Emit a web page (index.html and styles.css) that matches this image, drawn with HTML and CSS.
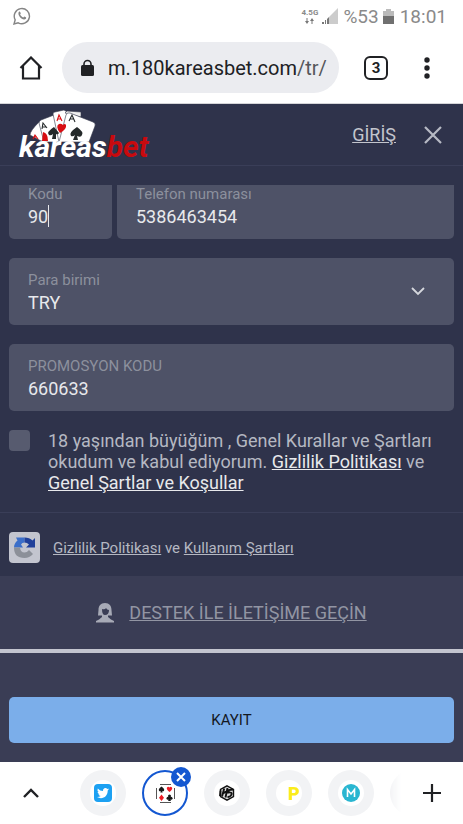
FILE: index.html
```html
<!DOCTYPE html>
<html lang="tr">
<head>
<meta charset="utf-8">
<meta name="viewport" content="width=device-width, initial-scale=1">
<title>Kareasbet</title>
<link rel="stylesheet" href="styles.css">
</head>
<body>
<div class="status">
  <svg class="status-app" width="18" height="18" viewBox="0 0 18 18" fill="none" stroke="#858585" stroke-width="1.4"><path d="M1 17l1.2-4.2A7.6 7.6 0 1 1 5.200 15.800z"/><path d="M5.600 5.200c.8-1.200 1.500-.6 2.200 1.200l-.7 1.100c.8 1.500 1.700 2.400 3.200 3l1-.9c1.800.8 2.400 1.200 1.600 2.100-2.800 2.600-8.600-2.800-7.300-6.500z" fill="#858585" stroke="none"/></svg>
  <div class="network"><span>4.5G</span>
    <svg width="9" height="6" viewBox="0 0 9 6" fill="#777"><path d="M1.500 0h1v3h1.500l-2 3-2-3h1.500zM6.500 6h1V3H9L7 0 5 3h1.500z"/></svg>
  </div>
  <svg class="signal" width="16" height="16" viewBox="0 0 16 16"><path d="M16 0v16H7V9z" fill="#ccc"/><path d="M0 14h2v2H0zM3 12h1v4H3z" fill="#777"/><path d="M5 11l2-2v7H5z" fill="#777"/></svg>
  <span>%53</span>
  <svg class="battery" width="11" height="15" viewBox="0 0 11 15"><path d="M3 0h5v2h3v6H0V2h3z" fill="#bbb"/><path d="M0 7h11v8H0z" fill="#707070"/></svg>
  <span>18:01</span>
</div>

<div class="toolbar">
  <button class="icon-button home" aria-label="Ana sayfa"><svg width="24" height="24" viewBox="0 0 24 24" fill="none" stroke="#202124" stroke-width="2.200"><path d="M1.500 12L12 1.500 22.500 12M4 10v12.500h16V10"/></svg></button>
  <div class="address">
    <svg width="13" height="18" viewBox="0 0 13 18"><path d="M3 7V5a3.500 3.500 0 0 1 7 0v2" fill="none" stroke="#202124" stroke-width="1.600"/><rect y="6" width="13" height="11" rx="1.500" fill="#202124"/></svg>
    <span class="url">m.180kareasbet.com<span class="path">/tr/</span></span>
  </div>
  <button class="tab-count" aria-label="Sekmeler">3</button>
  <button class="icon-button" aria-label="Menü"><svg width="6" height="22" viewBox="0 0 6 22" fill="#202124"><circle cx="3" cy="3" r="2.700"/><circle cx="3" cy="11" r="2.700"/><circle cx="3" cy="19" r="2.700"/></svg></button>
</div>

<header class="site-header">
  <a class="logo" href="#">
    <svg class="cards" width="68" height="34" viewBox="0 0 68 34" stroke="#34374a" stroke-width=".6">
      <path d="M10 13q-9 9-9 13l11 6 14-2z" fill="#fff"/>
      <path d="M10 14q0-2 2-3l13-5 6 27H15z" fill="#fff"/>
      <path d="M24 5q0-2 2-2l9-2 6 4-3 28H30z" fill="#fff"/>
      <path d="M36 4l2-2 14 1v5z" fill="#eee"/>
      <path d="M37 6q1-3 4-2l23 9q3 1 2 4l-6 16H30z" fill="#fff"/>
      <path d="M13 32l1-9q5 1 5 9z" fill="#d80d12" stroke="none"/>
      <path d="M25 18q-8 5-5 8 2 1 4-1l-1 5h4v-5q2 1 3-1z" fill="#24292a" stroke="none"/>
      <path d="M31 24q-5-7-1-9 2-1 4 1 2-2 3 0 1 4-6 8z" fill="#d80d12" stroke="none"/>
      <path d="M48 18q-9 6-6 9 2 1 4-1l-2 5h5l-1-4q4 2 5-1 2-3-5-8z" fill="#24292a" stroke="none"/>
      <g fill="none" stroke-width="1.100"><path d="M4 30l2-4 3 4M5 28h3M28 12l2-6 3 6M29 10h3" stroke="#d80d12"/><path d="M13 20l1-6 4 5M13 18h4M40 12l3-6 3 7M41 10h4" stroke="#24292a"/></g>
    </svg>
    <span class="wordmark">kareas<span class="accent">bet</span></span>
  </a>
  <a class="login" href="#">GİRİŞ</a>
  <button class="icon-button" aria-label="Kapat"><svg width="18" height="18" viewBox="0 0 18 18" fill="none" stroke="#b7bac4" stroke-width="2.200"><path d="M1 1l16 16M17 1L1 17"/></svg></button>
</header>

<main>
  <form class="form">
    <div class="phone">
      <div class="field cut code"><label for="code">Kodu</label><div class="value-row"><input id="code" value="90"><span class="caret"></span></div></div>
      <div class="field cut"><label for="phone">Telefon numarası</label><input id="phone" type="tel" value="5386463454"></div>
    </div>
    <div class="field currency"><label for="currency">Para birimi</label>
      <select id="currency"><option>TRY</option></select>
      <svg class="chevron" width="14" height="9" viewBox="0 0 14 9" fill="none" stroke="#d5d7dd" stroke-width="1.800"><path d="M1 1l6 6 6-6"/></svg>
    </div>
    <div class="field"><label for="promo">PROMOSYON KODU</label><input id="promo" value="660633"></div>
    <div class="agree">
      <input type="checkbox" id="agree">
      <label for="agree">18 yaşından büyüğüm , Genel Kurallar ve Şartları okudum ve kabul ediyorum. <a href="#">Gizlilik Politikası</a> ve <a href="#">Genel Şartlar ve Koşullar</a></label>
    </div>
  </form>
  <div class="captcha">
    <svg width="31" height="31" viewBox="0 0 31 31"><rect width="31" height="31" rx="4" fill="#c3c5cf"/><path d="M7 5.500h8.500v5q-2.500 0-3.500 2l2 3H5q0-4 3.500-7z" fill="#3b6ec9"/><path d="M15.500 5.500q5 0 8 3L26 6v9.500h-9l3-3q-2-2-4.500-2z" fill="#20409a"/><path d="M5 15.500h6q.5 5 4.500 5 2.500 0 4.500-2.500l4 4q-3.500 4-8.500 4Q5 26 5 15.500z" fill="#8c9099"/></svg>
    <p><a href="#">Gizlilik Politikası</a> ve <a href="#">Kullanım Şartları</a></p>
  </div>
  <section class="support">
    <svg width="18" height="20" viewBox="0 0 18 20"><path d="M9 0C4.500 0 2.500 3 2.500 7L2 12.500h4V14l-3 2.500L0 18v1.500h18V18l-3-1.500-3-2.500v-1.500h4L15.500 7C15.500 3 13.500 0 9 0z" fill="#a7aab6"/><path d="M6 6q3 1 4-1 1 2 3 2 0 5-4 5-3 0-3-6z" fill="#3a3d55"/></svg>
    <a href="#">DESTEK İLE İLETİŞİME GEÇİN</a>
  </section>
  <div class="submit"><button type="button">KAYIT</button></div>
</main>

<nav class="tabs">
  <button class="icon-button" aria-label="Genişlet"><svg width="16" height="10" viewBox="0 0 16 10" fill="none" stroke="#202124" stroke-width="2.400"><path d="M1 9l7-7 7 7"/></svg></button>
  <div class="tab-list">
    <button class="tab" aria-label="Twitter"><span class="favicon"><svg width="18" height="18" viewBox="0 0 18 18"><rect width="18" height="18" rx="4" fill="#1da1f2"/><path d="M15 5.200l-1.300.4q.8-.5 1-1.200l-1.400.5A2.500 2.500 0 0 0 9 7.100Q6 7 3.800 4.500 2.700 6.600 4.600 8l-1.100-.3q0 1.900 2 2.500l-1.100.1q.6 1.500 2.300 1.700-1.600 1.200-3.700 1.100c5.600 3 10.900-.8 10.700-6.600z" fill="#fff"/></svg></span></button>
    <button class="tab active" aria-label="Kareasbet"><span class="favicon"><svg width="19" height="19" viewBox="0 0 19 19"><path d="M4 .5h11M4 18.500h11M.5 4v11M18.500 4v11" stroke="#555" fill="none"/><g fill="#171717"><path d="M5.500 2.500Q2 5 3 6.700q1 1 2 0l-.7 1.800h2.400L6 6.700q1 1 2 0 1-1.700-2.500-4.200z"/><circle cx="13.500" cy="12" r="1.500"/><circle cx="12" cy="14.300" r="1.500"/><circle cx="15" cy="14.300" r="1.500"/><path d="M13 13h1l.8 4h-2.600z"/></g><path d="M13.500 8Q10 5.200 11 3.500q1.300-1.600 2.500 0 1.200-1.600 2.500 0 1 1.700-2.500 4.500zM5.500 10.500l2.500 3.200-2.500 3.200L3 13.700z" fill="#ee1c25"/></svg></span>
      <span class="close"><svg width="10" height="10" viewBox="0 0 10 10" stroke="#fff" stroke-width="2"><path d="M1 1l8 8M9 1L1 9"/></svg></span></button>
    <button class="tab" aria-label="HS"><span class="favicon"><svg width="16" height="16" viewBox="0 0 16 16" fill="none"><path d="M8 .8l6.500 3.500v7.400L8 15.200l-6.500-3.500V4.300z" fill="#ddd" stroke="#111" stroke-width="1.400"/><path d="M1.500 5.500L1 11M4 8.500l3-2M5.200 3.500L3 11.500M8.500 3L6.500 12.500M14 4.500l-4 .5-.5 2.500q4-.5 3 2t-4 2.500" stroke="#111" stroke-width="1.900"/></svg></span></button>
    <button class="tab" aria-label="P"><span class="favicon letter-p">P</span></button>
    <button class="tab" aria-label="M"><span class="favicon"><svg width="18" height="18" viewBox="0 0 18 18"><circle cx="9" cy="9" r="9" fill="#29b6d1"/><path d="M5.500 13V5.500L9 10l3.500-4.500V13" fill="none" stroke="#fff" stroke-width="1.600"/></svg></span></button>
    <button class="tab" aria-label="Sonraki sekme"></button>
  </div>
  <button class="icon-button" aria-label="Yeni sekme"><svg width="18" height="18" viewBox="0 0 18 18" stroke="#202124" stroke-width="2.200"><path d="M9 0v18M0 9h18"/></svg></button>
</nav>
</body>
</html>
```
FILE: styles.css
```css
* { box-sizing: border-box; }

body {
  margin: 0;
  background: #fff;
  font-family: Roboto, "Liberation Sans", sans-serif;
  color: #b5b8c2;
}

button {
  margin: 0;
  padding: 0;
  border: 0;
  background: none;
  font: inherit;
}

svg { display: block; flex: none; }

a { color: inherit; text-decoration: underline; }

.icon-button {
  display: flex;
  align-items: center;
  justify-content: center;
  flex: none;
}

/* Status bar */
.status {
  display: flex;
  align-items: center;
  height: 32px;
  padding: 0 16px 0 13px;
  color: #8a8a8a;
  font-size: 19px;
}
.status-app { margin-right: auto; }
.network {
  display: flex;
  flex-direction: column;
  align-items: center;
  gap: 1px;
  font-size: 8px;
  font-weight: 700;
  line-height: 9px;
}
.signal { margin: 0 5px 0 4px; }
.battery { margin: 0 6px 0 4px; }

/* Browser toolbar */
.toolbar {
  display: flex;
  align-items: center;
  height: 72px;
  padding: 0 33px 0 19px;
  border-bottom: 1px solid #d5d5d8;
}
.home { margin-right: 19px; }
.address {
  display: flex;
  align-items: center;
  flex: 1;
  gap: 14px;
  min-width: 0;
  height: 51px;
  padding: 0 8px 0 19px;
  border-radius: 26px;
  background: #ebecf0;
}
.url {
  flex: 1;
  overflow: hidden;
  color: #202124;
  font-size: 20px;
  line-height: 28px;
  white-space: nowrap;
}
.path { color: #55565a; }
.tab-count {
  width: 24px;
  height: 24px;
  margin: 0 36px 0 25px;
  border: 2px solid #202124;
  border-radius: 6px;
  color: #202124;
  font-size: 15px;
  font-weight: 700;
  line-height: 20px;
}

/* Site header */
.site-header {
  display: flex;
  align-items: center;
  height: 62px;
  padding: 0 21px 0 19px;
  border-bottom: 1px solid #3a3e58;
  background: #2f334b;
}
.logo {
  display: flex;
  flex-direction: column;
  margin-right: auto;
  text-decoration: none;
}
.cards { margin-left: 10px; }
.wordmark {
  margin-top: -10px;
  color: #fff;
  font-size: 30px;
  font-style: italic;
  font-weight: 700;
  line-height: 28px;
}
.accent { color: #c80a0e; }
.login { margin-right: 28px; font-size: 18px; color: #c3c5cd; }

/* Form */
main { background: #3a3d55; }
.form {
  padding: 19px 9px;
  border-bottom: 1px solid #3a3e58;
  background: #2f334b;
}
.phone { display: flex; gap: 5px; }
.field {
  flex: 1;
  min-width: 0;
  margin-bottom: 19px;
  padding: 13px 19px 10px;
  border-radius: 5px;
  background: #4e5267;
}
.field.cut { padding-top: 0; border-radius: 0 0 5px 5px; }
.field.code { flex: 0 0 103px; }
.field label {
  display: block;
  color: #8c909d;
  font-size: 15px;
  line-height: 18px;
}
.field input,
.field select {
  display: block;
  width: 100%;
  height: 26px;
  margin: 0;
  padding: 0;
  border: 0;
  outline: 0;
  background: none;
  color: #e8e9ec;
  font: inherit;
  font-size: 18px;
  appearance: none;
}
.value-row { display: flex; align-items: center; }
.value-row input { width: 20px; }
.caret { width: 1px; height: 22px; background: #e8e9ec; }
.currency { position: relative; }
.chevron {
  position: absolute;
  top: 29px;
  right: 29px;
  pointer-events: none;
}

.agree { display: flex; gap: 18px; }
.agree input {
  flex: none;
  width: 21px;
  height: 21px;
  margin: 0;
  border-radius: 4px;
  background: #575b6f;
  appearance: none;
}
.agree label { font-size: 18px; line-height: 21px; }
.agree a { color: #e8e9ec; }

.captcha {
  display: flex;
  align-items: center;
  gap: 13px;
  height: 63px;
  padding: 6px 9px 0;
  background: #2f334b;
  font-size: 15px;
}
.captcha p { margin: 0; }

.support {
  display: flex;
  align-items: center;
  justify-content: center;
  gap: 15px;
  height: 77px;
  border-bottom: 4px solid #c3c5cf;
  color: #9295a3;
  font-size: 18px;
}

.submit { padding: 44px 9px 19px; }
.submit button {
  display: block;
  width: 100%;
  height: 46px;
  border-radius: 5px;
  background: #7baeea;
  color: #14181f;
  font-size: 15px;
}

/* Tab strip */
.tabs {
  display: flex;
  align-items: center;
  height: 62px;
  padding: 0 22px 0 23px;
}
.tab-list {
  display: flex;
  flex: 1;
  gap: 16px;
  min-width: 0;
  margin: 0 22px 0 41px;
  padding: 8px 0;
  overflow: hidden;
  mask-image: linear-gradient(to right, #000 calc(100% - 12px), transparent);
}
.tab {
  position: relative;
  display: flex;
  align-items: center;
  justify-content: center;
  flex: none;
  width: 46px;
  height: 46px;
  border-radius: 50%;
  background: #f2f3f5;
}
.active { border: 2px solid #1357d1; background: #fff; }
.favicon {
  display: flex;
  align-items: center;
  justify-content: center;
  width: 26px;
  height: 26px;
  border-radius: 50%;
  background: #fff;
}
.letter-p {
  padding-left: 9px;
  color: #fbec1c;
  font-size: 18px;
  font-weight: 900;
}
.close {
  position: absolute;
  top: -5px;
  right: -5px;
  display: flex;
  align-items: center;
  justify-content: center;
  width: 20px;
  height: 20px;
  border-radius: 50%;
  background: #1357d1;
}
```
